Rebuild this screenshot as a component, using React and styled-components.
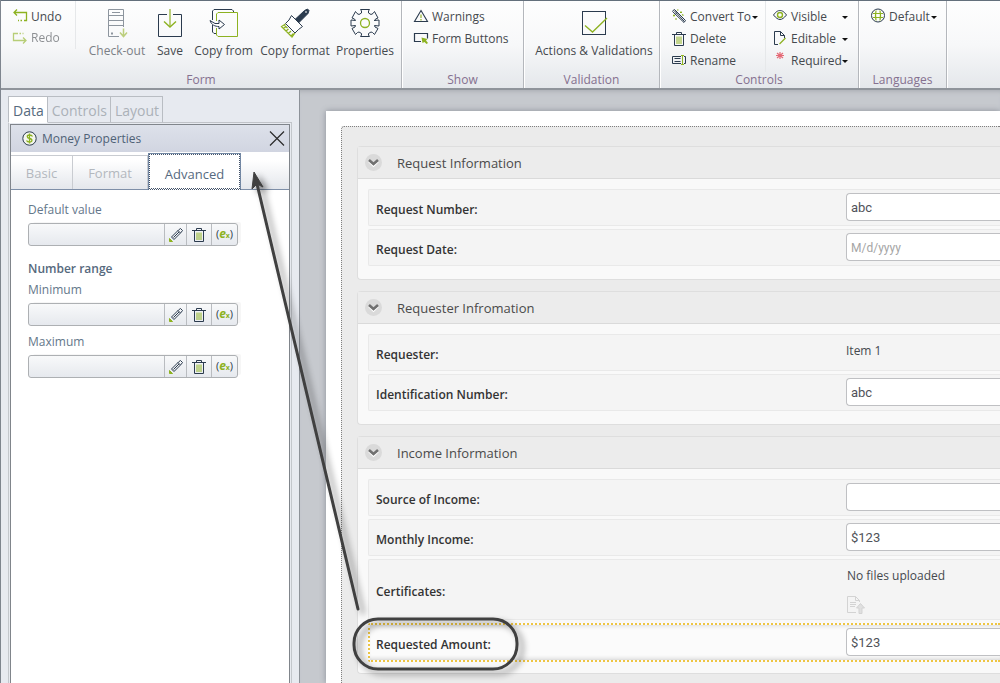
import React from "react";
import styled, { createGlobalStyle } from "styled-components";

const navy = "#2b3b4e";
const green = "#8db221";
const paleGreen = "#bccf7d";

const GlobalStyle = createGlobalStyle`
  *, *::before, *::after { box-sizing: border-box; }
  body {
    margin: 0;
    background: #c6c9ce;
    font-family: "Open Sans", "Noto Sans", sans-serif;
    font-size: 12px;
    line-height: 16px;
    color: #45494e;
  }
  button, input { font: inherit; color: inherit; margin: 0; }
  button { background: none; border: 0; padding: 0; cursor: pointer; }
  svg { display: block; flex: none; overflow: visible; }
`;

const Page = styled.div`
  position: relative;
  display: flex;
  flex-direction: column;
  min-height: 100vh;
  overflow: hidden;
  border-left: 1px solid #7e858e;
`;

/* ---------- ribbon ---------- */

const Ribbon = styled.header`
  display: flex;
  height: 90px;
  border-top: 1px solid #64707c;
  border-bottom: 2px solid #8f949b;
  background: linear-gradient(#fefefe, #f7f8f9 50%, #e4e7eb);
`;

const Group = styled.section`
  flex: none;
  display: flex;
  flex-direction: column;
  width: ${(p) => p.$width}px;
  border-right: 1px solid #b4b7bc;
  box-shadow: 1px 0 0 #ffffff;
`;

const GroupBody = styled.div`
  flex: 1;
  display: flex;
  padding-left: ${(p) => p.$inset || 0}px;
`;

const Caption = styled.h2`
  margin: 0;
  font-size: 12px;
  font-weight: 400;
  line-height: 16px;
  text-align: center;
  color: #85708f;
`;

const CommandColumn = styled.div`
  display: flex;
  flex-direction: column;
  width: ${(p) => p.$width || "auto"};
  height: ${(p) => p.$height || "auto"};
  padding: 5px 8px 0 ${(p) => (p.$narrow ? 7 : 12)}px;
  border-right: ${(p) => (p.$divider ? "1px solid #e6e8ea" : "0")};
`;

const Command = styled.button`
  display: flex;
  align-items: center;
  gap: 4px;
  height: 22px;
  white-space: nowrap;
  opacity: ${(p) => (p.disabled ? 0.6 : 1)};
`;

const CommandText = styled.span`
  flex: ${(p) => (p.$wide ? 1 : "none")};
  min-width: 0;
  text-align: left;
`;

const Caret = styled.span`
  margin-left: -3px;
  border: 3px solid transparent;
  border-top-color: #111;
  border-bottom: 0;
`;

const BigCommand = styled.button`
  display: flex;
  flex-direction: column;
  align-items: center;
  justify-content: flex-start;
  gap: 5px;
  width: ${(p) => p.$width}px;
  padding-top: 7px;
  white-space: nowrap;
  color: ${(p) => (p.disabled ? "#7b8086" : "inherit")};
`;

/* ---------- workspace ---------- */

const Workspace = styled.div`
  flex: 1;
  display: flex;
`;

const Sidebar = styled.aside`
  flex: none;
  display: flex;
  flex-direction: column;
  width: 299px;
  padding: 6px 7px 0 7px;
  border-right: 1px solid #8d9299;
  background: #e7eaf0;
`;

const MainTabs = styled.div`
  display: flex;
  height: 27px;
  border-bottom: 1px solid #c0c3c8;
`;

const MainTab = styled.button`
  height: 27px;
  padding: 3px 3px 0 4px;
  border: 1px solid #b9bdc3;
  border-left-width: ${(p) => (p.$active ? "1px" : 0)};
  border-bottom-color: ${(p) => (p.$active ? "#fff" : "#c0c3c8")};
  background: ${(p) => (p.$active ? "#fff" : "transparent")};
  color: ${(p) => (p.$active ? "#566a7e" : "#abb1b8")};
  font-size: 14px;
`;

const Frame = styled.div`
  flex: 1;
  display: flex;
  flex-direction: column;
  padding: 1px 1px 0;
  border-left: 1px solid #c3c7cc;
  border-right: 1px solid #c3c7cc;
`;

const Panel = styled.div`
  flex: 1;
  border: 1px solid #80858b;
  border-bottom: 0;
  background: #fff;
`;

const PanelHeader = styled.div`
  display: flex;
  align-items: center;
  gap: 5px;
  height: 27px;
  padding: 0 5px 0 11px;
  background: linear-gradient(#dde1ea, #d1d5e1);
  color: #4f6276;
`;

const PanelTitle = styled.h1`
  flex: 1;
  margin: 0;
  font-size: 12px;
  font-weight: 400;
`;

const SubTabs = styled.div`
  display: flex;
  align-items: flex-end;
  height: 37px;
  margin-top: 1px;
  border-bottom: 1px solid #7e8fa8;
  background: linear-gradient(#ffffff 20%, #e4e7ec);
`;

const SubTab = styled.button`
  width: ${(p) => p.$width}px;
  height: ${(p) => (p.$active ? 37 : 34)}px;
  margin-bottom: ${(p) => (p.$active ? "-1px" : 0)};
  padding-top: ${(p) => (p.$active ? "4px" : 0)};
  border: 1px solid ${(p) => (p.$active ? "#7287a3" : "#c9ccd1")};
  border-left-width: ${(p) => (p.$active ? "1px" : 0)};
  border-bottom: ${(p) => (p.$active ? "1px dotted #44546a" : 0)};
  outline: ${(p) => (p.$active ? "1px dotted #44546a" : "none")};
  outline-offset: -2px;
  background: ${(p) => (p.$active ? "#fff" : "transparent")};
  color: ${(p) => (p.$active ? "#566a80" : "#b3b8be")};
  font-size: 13px;
`;

const PropertyList = styled.div`
  display: flex;
  flex-direction: column;
  padding: 12px 17px;
  color: #64778a;
`;

const PropertyTitle = styled.h3`
  margin: 15px 0 5px;
  font-size: 12px;
  font-weight: 600;
  color: #56697d;
`;

const PropertyLabel = styled.label`
  margin-bottom: 5px;
`;

const ValueBox = styled.div`
  display: flex;
  width: 210px;
  height: 23px;
  margin-bottom: ${(p) => (p.$gap ? "8px" : 0)};
  border: 1px solid #adb0b3;
  border-radius: 3px;
  background: linear-gradient(#f8f9fa, #e6e9ee);
  box-shadow: 4px -2px 0 -1px #f6f6f6;
  overflow: hidden;
`;

const ValueInput = styled.input`
  flex: 1;
  min-width: 0;
  padding: 0 4px;
  border: 0;
  background: none;
`;

const ValueButton = styled.button`
  display: grid;
  place-items: center;
  width: ${(p) => p.$width}px;
  border-left: 1px solid #b9bcc0;
`;

/* ---------- form canvas ---------- */

const Canvas = styled.main`
  flex: 1;
  display: flex;
  min-width: 0;
  padding: 21px 0 0 26px;
  background: #c6c9ce;
  box-shadow: inset 0 5px 5px -4px #a6a9af;
`;

const Sheet = styled.div`
  flex: 1;
  display: flex;
  min-width: 0;
  padding: 15px 0 0 15px;
  background: #fff;
  box-shadow: 0 0 6px #8b8f98;
`;

const Form = styled.form`
  flex: 1;
  display: flex;
  flex-direction: column;
  gap: 11px;
  min-width: 0;
  padding: 19px 0 0 15px;
  border: 1px dotted #7f7f7f;
  border-width: 1px 0 0 1px;
  border-top-left-radius: 3px;
  background: #ebebeb;
`;

const Card = styled.section`
  border: 1px solid #dedede;
  border-right: 0;
  border-radius: 4px 0 0 4px;
  background: #f9f9f9;
`;

const CardHeader = styled.div`
  display: flex;
  align-items: center;
  gap: 15px;
  height: 32px;
  padding-left: 7px;
  border-bottom: 1px solid #dadada;
  background: #ececec;
`;

const CardTitle = styled.h2`
  margin: 0;
  font-size: 13px;
  font-weight: 400;
  color: #4a4a4a;
`;

const Toggle = styled.button`
  display: grid;
  place-items: center;
  width: 17px;
  height: 17px;
  border-radius: 50%;
  background: #dadada;
`;

const Rows = styled.div`
  display: flex;
  flex-direction: column;
  gap: 3px;
  padding: 10px 0 ${(p) => (p.$last ? 11 : 13)}px 10px;
`;

const Row = styled.div`
  display: grid;
  grid-template-columns: 470px minmax(0, 1fr);
  align-items: center;
  height: ${(p) => (p.$tall ? 61 : 37)}px;
  padding: 0 0 1px 7px;
  border: 1px solid #e9e9e9;
  border-right: 0;
  border-radius: 2px 0 0 2px;
  background: #f4f4f4;
`;

const SelectedRow = styled(Row)`
  height: 39px;
  padding-left: 6px;
  border: 2px dotted #eec543;
  border-right: 0;
  background: #fbfbfb;
  box-shadow: inset 0 4px 4px -3px #dcdcdc, inset 0 -4px 4px -3px #d0d0d0;
`;

const RowLabel = styled.label`
  padding-top: 6px;
  font-weight: 600;
  color: #333;
`;

const TextInput = styled.input`
  width: 100%;
  height: 28px;
  padding: 0 4px;
  border: 1px solid #bfc0c3;
  border-right: 0;
  border-radius: 4px 0 0 4px;
  background: #fff;
  font-family: Roboto, sans-serif;
  font-size: 13px;
  color: #505259;
  &::placeholder { color: #a5a5a5; opacity: 1; font-size: 12px; }
`;

const StaticValue = styled.output`
  padding-bottom: 2px;
`;

const Files = styled.div`
  display: flex;
  flex-direction: column;
  gap: 12px;
  padding: 4px 0 0 1px;
`;

/* ---------- callout ---------- */

const Callout = styled.svg`
  position: absolute;
  left: 0;
  top: 0;
  pointer-events: none;
  filter: drop-shadow(5px 4px 3px rgba(0, 0, 0, 0.45));
`;

/* ---------- icons ---------- */

const Icon = ({ w = 14, h = 14, children }) => (
  <svg width={w} height={h} viewBox={`0 0 ${w} ${h}`} fill="none" stroke={navy} aria-hidden="true">
    {children}
  </svg>
);

const UndoIcon = () => (
  <Icon>
    <path d="M1 2.500H13.500V10.500H11M9 10.500H7.500M6 10.500H5M4 -.5L1 2.500L4 5.500" stroke={green} strokeWidth="1.300" />
  </Icon>
);
const RedoIcon = () => (
  <Icon>
    <path d="M5 2.500H.5V9.500H13M6.500 2.500H8M9.500 2.500H10.500M10 6.500L13 9.500L10 12.500" stroke={green} strokeWidth="1.300" />
  </Icon>
);
const CheckoutIcon = () => (
  <Icon w={18} h={30}>
    <path d="M11 28.500H.5V1.500H15.500V19M.5 7.500H15.500M.5 12.500H15.500M.5 17.500H15.500M4 4.500H12" stroke="#8d959e" />
    <path d="M3 25.500H5" stroke="#8d959e" strokeWidth="2" />
    <path d="M15.500 20.500V28M12 24.500L15.500 28.500L19 24.500" stroke={paleGreen} strokeWidth="1.500" />
  </Icon>
);
const SaveIcon = () => (
  <Icon w={24} h={30}>
    <path d="M9 6.500H.5V28.500H23.500V6.500H15" />
    <path d="M12 1V18" stroke={paleGreen} strokeWidth="2" />
    <path d="M6 13.500L12 19L18 13.500" stroke={green} strokeWidth="1.400" />
  </Icon>
);
const CopyFromIcon = () => (
  <Icon w={28} h={30}>
    <path d="M6 25.500H4L2.500 24V17M2.500 12V3L4 1.500H22L23.500 3V4" />
    <path d="M6.500 13V6L8 4.500H27.500V28.500H8L6.500 27V20" stroke={green} />
    <path d="M0 12.500L5 15.500H9V12L14.500 16.500L9 21V18.500C5 18.500 1.500 17 0 12.500Z" fill="#fff" />
  </Icon>
);
const BrushIcon = () => (
  <Icon w={30} h={30}>
    <path d="M15 11.500L24.500 2.500L27.500 1L29 2.500L28 5.500L18.500 15Z" fill={navy} />
    <path d="M11.500 7.500L22.500 18.500L18.500 21.500L15 25L5.500 15.500L9 12Z" fill="#fff" />
    <path d="M5.500 16L1.500 18.500L12 29L15 25M4 17L7.500 20M3.500 20.500L6 18.500M6 23L8.500 21M8.500 25.500L11 23M11 28L13.500 25.500" stroke={green} strokeWidth="1.200" />
    <path d="M25.500 4.500L26.500 3.500" stroke="#fff" strokeWidth="1.500" />
  </Icon>
);
const GearIcon = () => (
  <Icon w={28} h={30}>
    <path d="M10.500 5V3L9.500 1.500H18.500L17.500 3V5L20 6.500L22 5.500L23.500 3.500L27 10L24.500 11L23.500 13V12.500L28 12V18L23.500 17.500L24 19L27 20.500L23.500 26.500L21.500 24.500L20 24L17.500 25.500V27L18.500 28.500H9.500L10.500 27V25.500L8 24L6.500 24.500L4.500 26.500L1 20.500L4 19L4.500 17.500L0 18V12L4.500 12.500L3.500 11L1 10L4.500 3.500L6 5.500L8 6.500Z" strokeLinejoin="round" />
    <circle cx="14" cy="15" r="4.500" stroke={green} strokeWidth="1.300" />
  </Icon>
);
const CheckBoxIcon = () => (
  <Icon w={24} h={30}>
    <rect x=".5" y="3.500" width="23" height="23" />
    <path d="M3 17.500L10.500 24L25 10" stroke={green} strokeWidth="1.300" />
  </Icon>
);
const WarningIcon = () => (
  <Icon>
    <path d="M7 .5L13.500 11.500H.5Z" strokeWidth="1.100" />
    <path d="M7 4.500V8M7 9V10.500" stroke={paleGreen} strokeWidth="2" />
  </Icon>
);
const FormButtonIcon = () => (
  <Icon>
    <path d="M7 9.500H.5V1.500H13.500V6.500" strokeWidth="1.200" />
    <path d="M7.500 5.500L13.500 7L12 8.500L14 11L12.500 12L10.500 10L8.500 11Z" fill={green} stroke="none" />
  </Icon>
);
const WandIcon = () => (
  <Icon>
    <path d="M.5 1L2.500 -.5L13.500 10.500L12 12.500L.5 1.500M3.500 4L5.500 2.500M2 .5L12.500 11.500" />
    <path d="M5 0H6.500M9 1.500V3M8 2.300H10M1 5.500H3M2 4.500V6.500M10 4.500L11.500 5.500M3 9H5" stroke={green} strokeWidth="1.200" />
  </Icon>
);
const TrashIcon = () => (
  <Icon>
    <path d="M0 2.500H14M4.500 2V.5H9.500V2M2.500 3V13.500H11.500V3" />
    <path d="M5 4.500V12M7 4.500V12M9 4.500V12" stroke={green} />
  </Icon>
);
const RenameIcon = () => (
  <Icon>
    <path d="M9 9.500H.5V2.500H9M12 2.500H13.500V9.500H12M2.500 4.500H8.500M2.500 7.500H8.500" />
    <path d="M9 1.500H12M9 10.500H12M10.500 1.500V10.500" stroke={green} />
  </Icon>
);
const EyeIcon = () => (
  <Icon>
    <path d="M.5 5C3 1.500 5 .5 7 .5S11 1.500 13.500 5C11 8 9 9.500 7 9.500S3 8 .5 5Z" />
    <circle cx="7" cy="5" r="2.500" stroke={green} strokeWidth="1.400" />
  </Icon>
);
const EditableIcon = () => (
  <Icon>
    <path d="M5 12.500H1.500V-.5H7.500L11.500 3.500V6M7.500 -.5V3.500H11.500" />
    <path d="M6.500 12L12.500 6" stroke={green} strokeWidth="1.300" />
  </Icon>
);
const RequiredIcon = () => (
  <Icon>
    <path d="M7 -2V5M4 -1L10 4M10 -1L4 4M3 1.500H11" stroke="#e56a76" strokeWidth="1.200" />
  </Icon>
);
const GlobeIcon = () => (
  <Icon>
    <circle cx="7" cy="5.500" r="6.500" />
    <path d="M5 .5C4.300 4 4.300 7 5 10.500M9 .5C9.700 4 9.700 7 9 10.500M2 3.500H12M2 7.500H12" stroke={green} strokeWidth="1.200" />
  </Icon>
);
const MoneyIcon = () => (
  <Icon w={15} h={15}>
    <circle cx="7.500" cy="7.500" r="6.700" fill="#f4f6ee" />
    <path d="M10.500 5.500C10 4.500 9 4 7.500 4C4.500 4 4.500 7 7.500 7.500C11 8 10.500 11 7.500 11C6 11 5 10.500 4.500 9.500M7.500 2.500V12.500" stroke={green} strokeWidth="1.300" />
  </Icon>
);
const CloseIcon = () => (
  <Icon w={14} h={14}>
    <path d="M0 -.5L14 13.500M14 -.5L0 13.500" stroke="#2b2b2b" strokeWidth="1.200" />
  </Icon>
);
const PencilIcon = () => (
  <Icon>
    <path d="M2.500 9L9.500 2L11.500 .5L13.500 2.500L12 4.500L5 11.500ZM4.500 9.500L10 4M9 2.500L11.500 5" />
    <path d="M.5 13.500V10.500L3.500 13.500Z" fill={green} stroke={green} />
  </Icon>
);
const UploadIcon = () => (
  <Icon w={18} h={18}>
    <g stroke="#d3d3d3">
      <path d="M9 16.500H.5V.5H8.500L12.500 4.500V6M8.500 .5V4.500H12.500M3 6.500H9M3 8.500H9M3 10.500H8" />
      <path d="M13.500 7.500L17.500 12H15V17.500H12V12H9.500Z" fill="#e0e0e0" />
    </g>
  </Icon>
);
const ChevronIcon = () => (
  <Icon w={11} h={7}>
    <path d="M1 2L5.500 6.500L10 2" stroke="#fff" strokeWidth="2.500" />
    <path d="M1 1L5.500 5L10 1" stroke="#707070" strokeWidth="2.600" />
  </Icon>
);

const ExpressionMark = styled.span`
  font-size: 11px;
  line-height: 14px;
  color: ${navy};
  em {
    font-family: "Open Sans", sans-serif;
    font-size: 12px;
    font-weight: 700;
    color: ${green};
  }
  small { font-size: 7px; font-weight: 700; color: ${green}; }
`;

/* ---------- composed parts ---------- */

const SmallCommand = ({ icon, text, menu, wide, ...rest }) => (
  <Command type="button" {...rest}>
    {icon}
    <CommandText $wide={wide}>{text}</CommandText>
    {menu && <Caret />}
  </Command>
);

const LargeCommand = ({ icon, text, width, disabled }) => (
  <BigCommand type="button" $width={width} disabled={disabled}>
    {icon}
    {text}
  </BigCommand>
);

const PropertyField = ({ id, label, gap }) => (
  <>
    <PropertyLabel htmlFor={id}>{label}</PropertyLabel>
    <ValueBox $gap={gap}>
      <ValueInput id={id} type="text" />
      <ValueButton type="button" $width={22} aria-label="Edit">
        <PencilIcon />
      </ValueButton>
      <ValueButton type="button" $width={25} aria-label="Delete">
        <TrashIcon />
      </ValueButton>
      <ValueButton type="button" $width={26} aria-label="Expression">
        <ExpressionMark>
          (<em>e</em>
          <small>x</small>)
        </ExpressionMark>
      </ValueButton>
    </ValueBox>
  </>
);

const FormCard = ({ title, last, children }) => (
  <Card>
    <CardHeader>
      <Toggle type="button" aria-label={`Collapse ${title}`}>
        <ChevronIcon />
      </Toggle>
      <CardTitle>{title}</CardTitle>
    </CardHeader>
    <Rows $last={last}>{children}</Rows>
  </Card>
);

const Field = ({ as: Wrapper = Row, id, label, ...input }) => (
  <Wrapper>
    <RowLabel htmlFor={id}>{label}</RowLabel>
    <TextInput id={id} type="text" {...input} />
  </Wrapper>
);

export default function App() {
  return (
    <Page>
      <GlobalStyle />
      <Ribbon>
        <Group $width={401}>
          <GroupBody>
            <CommandColumn $width="75px" $height="48px" $divider>
              <SmallCommand icon={<UndoIcon />} text="Undo" />
              <SmallCommand icon={<RedoIcon />} text="Redo" disabled />
            </CommandColumn>
            <GroupBody $inset={6}>
              <LargeCommand icon={<CheckoutIcon />} text="Check-out" width={70} disabled />
              <LargeCommand icon={<SaveIcon />} text="Save" width={36} />
              <LargeCommand icon={<CopyFromIcon />} text="Copy from" width={71} />
              <LargeCommand icon={<BrushIcon />} text="Copy format" width={72} />
              <LargeCommand icon={<GearIcon />} text="Properties" width={68} />
            </GroupBody>
          </GroupBody>
          <Caption>Form</Caption>
        </Group>
        <Group $width={122}>
          <GroupBody>
            <CommandColumn>
              <SmallCommand icon={<WarningIcon />} text="Warnings" />
              <SmallCommand icon={<FormButtonIcon />} text="Form Buttons" />
            </CommandColumn>
          </GroupBody>
          <Caption>Show</Caption>
        </Group>
        <Group $width={136}>
          <GroupBody $inset={5}>
            <LargeCommand icon={<CheckBoxIcon />} text="Actions & Validations" width={130} />
          </GroupBody>
          <Caption>Validation</Caption>
        </Group>
        <Group $width={199}>
          <GroupBody>
            <CommandColumn $width="106px" $divider>
              <SmallCommand icon={<WandIcon />} text="Convert To" menu />
              <SmallCommand icon={<TrashIcon />} text="Delete" />
              <SmallCommand icon={<RenameIcon />} text="Rename" />
            </CommandColumn>
            <CommandColumn $width="90px" $narrow>
              <SmallCommand icon={<EyeIcon />} text="Visible" menu wide />
              <SmallCommand icon={<EditableIcon />} text="Editable" menu wide />
              <SmallCommand icon={<RequiredIcon />} text="Required" menu wide />
            </CommandColumn>
          </GroupBody>
          <Caption>Controls</Caption>
        </Group>
        <Group $width={88}>
          <GroupBody>
            <CommandColumn>
              <SmallCommand icon={<GlobeIcon />} text="Default" menu />
            </CommandColumn>
          </GroupBody>
          <Caption>Languages</Caption>
        </Group>
      </Ribbon>

      <Workspace>
        <Sidebar>
          <MainTabs>
            <MainTab type="button" $active>Data</MainTab>
            <MainTab type="button">Controls</MainTab>
            <MainTab type="button">Layout</MainTab>
          </MainTabs>
          <Frame>
            <Panel>
              <PanelHeader>
                <MoneyIcon />
                <PanelTitle>Money Properties</PanelTitle>
                <button type="button" aria-label="Close">
                  <CloseIcon />
                </button>
              </PanelHeader>
              <SubTabs>
                <SubTab type="button" $width={62}>Basic</SubTab>
                <SubTab type="button" $width={75}>Format</SubTab>
                <SubTab type="button" $width={93} $active>Advanced</SubTab>
              </SubTabs>
              <PropertyList>
                <PropertyField id="default-value" label="Default value" />
                <PropertyTitle>Number range</PropertyTitle>
                <PropertyField id="minimum" label="Minimum" gap />
                <PropertyField id="maximum" label="Maximum" />
              </PropertyList>
            </Panel>
          </Frame>
        </Sidebar>

        <Canvas>
          <Sheet>
            <Form>
              <FormCard title="Request Information">
                <Field id="request-number" label="Request Number:" defaultValue="abc" />
                <Field id="request-date" label="Request Date:" placeholder="M/d/yyyy" />
              </FormCard>
              <FormCard title="Requester Infromation">
                <Row>
                  <RowLabel htmlFor="requester">Requester:</RowLabel>
                  <StaticValue id="requester">Item 1</StaticValue>
                </Row>
                <Field id="identification" label="Identification Number:" defaultValue="abc" />
              </FormCard>
              <FormCard title="Income Information" last>
                <Field id="source" label="Source of Income:" />
                <Field id="monthly" label="Monthly Income:" defaultValue="$123" />
                <Row $tall>
                  <RowLabel as="span">Certificates:</RowLabel>
                  <Files>
                    <span>No files uploaded</span>
                    <button type="button" aria-label="Upload file">
                      <UploadIcon />
                    </button>
                  </Files>
                </Row>
                <Field as={SelectedRow} id="requested" label="Requested Amount:" defaultValue="$123" />
              </FormCard>
            </Form>
          </Sheet>
        </Canvas>
      </Workspace>

      <Callout width="530" height="680" viewBox="1 0 530 680" fill="none" aria-hidden="true">
        <path d="M358 609L257 184" stroke="#404040" strokeWidth="3" strokeLinecap="round" />
        <path d="M254 172L263 187L257 184L252 189Z" fill="#404040" stroke="#404040" strokeLinejoin="round" />
        <rect x="354" y="619" width="163" height="50" rx="24" stroke="#404040" strokeWidth="3" />
      </Callout>
    </Page>
  );
}
